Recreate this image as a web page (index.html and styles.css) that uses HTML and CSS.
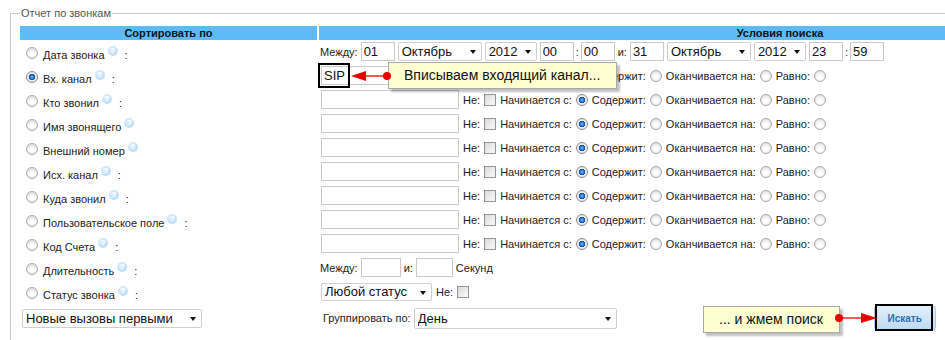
FILE: index.html
```html
<!DOCTYPE html>
<html lang="ru">
<head>
    <meta charset="UTF-8">
    <title>Отчет по звонкам</title>
    <link rel="stylesheet" href="styles.css">
</head>
<body>
    <!-- Форма отчета -->
    <fieldset class="report">
        <legend>Отчет по звонкам</legend>
        <div class="grid">
            <div class="head">Сортировать по</div>
            <div class="head">Условия поиска</div>

            <!-- Дата звонка -->
            <div class="sort"><input type="radio" name="order"><span>Дата звонка<i class="help">?</i> :</span></div>
            <div class="cond tight">
                <span>Между:</span>
                <input class="txt num" value="01">
                <span class="sel month"><select><option>Октябрь</option></select></span>
                <span class="sel year"><select><option>2012</option></select></span>
                <input class="txt num" value="00">
                <span class="colon">:</span>
                <input class="txt num" value="00">
                <span>и:</span>
                <input class="txt num" value="31">
                <span class="sel month"><select><option>Октябрь</option></select></span>
                <span class="sel year"><select><option>2012</option></select></span>
                <input class="txt num" value="23">
                <span class="colon">:</span>
                <input class="txt num" value="59">
            </div>

            <!-- Вх. канал -->
            <div class="sort"><input type="radio" name="order" checked><span>Вх. канал<i class="help">?</i> :</span></div>
            <div class="cond">
                <input class="txt" value="SIP">
                <span>Не:</span><input type="checkbox">
                <span>Начинается с:</span><input type="radio" name="m1" checked>
                <span>Содержит:</span><input type="radio" name="m1">
                <span>Оканчивается на:</span><input type="radio" name="m1">
                <span>Равно:</span><input type="radio" name="m1">
            </div>

            <!-- Кто звонил -->
            <div class="sort"><input type="radio" name="order"><span>Кто звонил<i class="help">?</i> :</span></div>
            <div class="cond">
                <input class="txt">
                <span>Не:</span><input type="checkbox">
                <span>Начинается с:</span><input type="radio" name="m2" checked>
                <span>Содержит:</span><input type="radio" name="m2">
                <span>Оканчивается на:</span><input type="radio" name="m2">
                <span>Равно:</span><input type="radio" name="m2">
            </div>

            <!-- Имя звонящего -->
            <div class="sort"><input type="radio" name="order"><span>Имя звонящего<i class="help">?</i></span></div>
            <div class="cond">
                <input class="txt">
                <span>Не:</span><input type="checkbox">
                <span>Начинается с:</span><input type="radio" name="m3" checked>
                <span>Содержит:</span><input type="radio" name="m3">
                <span>Оканчивается на:</span><input type="radio" name="m3">
                <span>Равно:</span><input type="radio" name="m3">
            </div>

            <!-- Внешний номер -->
            <div class="sort"><input type="radio" name="order"><span>Внешний номер<i class="help">?</i></span></div>
            <div class="cond">
                <input class="txt">
                <span>Не:</span><input type="checkbox">
                <span>Начинается с:</span><input type="radio" name="m4" checked>
                <span>Содержит:</span><input type="radio" name="m4">
                <span>Оканчивается на:</span><input type="radio" name="m4">
                <span>Равно:</span><input type="radio" name="m4">
            </div>

            <!-- Исх. канал -->
            <div class="sort"><input type="radio" name="order"><span>Исх. канал<i class="help">?</i> :</span></div>
            <div class="cond">
                <input class="txt">
                <span>Не:</span><input type="checkbox">
                <span>Начинается с:</span><input type="radio" name="m5" checked>
                <span>Содержит:</span><input type="radio" name="m5">
                <span>Оканчивается на:</span><input type="radio" name="m5">
                <span>Равно:</span><input type="radio" name="m5">
            </div>

            <!-- Куда звонил -->
            <div class="sort"><input type="radio" name="order"><span>Куда звонил<i class="help">?</i> :</span></div>
            <div class="cond">
                <input class="txt">
                <span>Не:</span><input type="checkbox">
                <span>Начинается с:</span><input type="radio" name="m6" checked>
                <span>Содержит:</span><input type="radio" name="m6">
                <span>Оканчивается на:</span><input type="radio" name="m6">
                <span>Равно:</span><input type="radio" name="m6">
            </div>

            <!-- Пользовательское поле -->
            <div class="sort"><input type="radio" name="order"><span>Пользовательское поле<i class="help">?</i> :</span></div>
            <div class="cond">
                <input class="txt">
                <span>Не:</span><input type="checkbox">
                <span>Начинается с:</span><input type="radio" name="m7" checked>
                <span>Содержит:</span><input type="radio" name="m7">
                <span>Оканчивается на:</span><input type="radio" name="m7">
                <span>Равно:</span><input type="radio" name="m7">
            </div>

            <!-- Код Счета -->
            <div class="sort"><input type="radio" name="order"><span>Код Счета<i class="help">?</i> :</span></div>
            <div class="cond">
                <input class="txt">
                <span>Не:</span><input type="checkbox">
                <span>Начинается с:</span><input type="radio" name="m8" checked>
                <span>Содержит:</span><input type="radio" name="m8">
                <span>Оканчивается на:</span><input type="radio" name="m8">
                <span>Равно:</span><input type="radio" name="m8">
            </div>

            <!-- Длительность -->
            <div class="sort"><input type="radio" name="order"><span>Длительность<i class="help">?</i> :</span></div>
            <div class="cond tight">
                <span>Между:</span>
                <input class="txt dur">
                <span>и:</span>
                <input class="txt dur2">
                <span>Секунд</span>
            </div>

            <!-- Статус звонка -->
            <div class="sort"><input type="radio" name="order"><span>Статус звонка<i class="help">?</i> :</span></div>
            <div class="cond">
                <span class="sel status"><select><option>Любой статус</option></select></span>
                <span>Не:</span><input type="checkbox">
            </div>

            <!-- Нижняя строка -->
            <div class="sort bottom">
                <span class="sel order"><select><option>Новые вызовы первыми</option></select></span>
            </div>
            <div class="cond bottom">
                <span>Группировать по:</span>
                <span class="sel group"><select><option>День</option></select></span>
                <button class="search">Искать</button>
            </div>
        </div>
    </fieldset>

    <!-- Подсказки поверх формы -->
    <div class="mark mark-sip"></div>
    <div class="mark mark-btn"></div>
    <div class="note note-sip">Вписываем входящий канал...</div>
    <div class="note note-btn">... и жмем поиск</div>
    <svg class="arrows" width="945" height="340" viewBox="0 0 945 340">
        <line x1="364" y1="76" x2="387" y2="76" stroke="#e60000" stroke-width="1.3"/>
        <polygon points="351,76 366,71 366,81" fill="#e60000"/>
        <circle cx="387" cy="76" r="4" fill="#e60000"/>
        <line x1="839" y1="318" x2="862" y2="318" stroke="#e60000" stroke-width="1.3"/>
        <polygon points="877,318 861,313 861,323" fill="#e60000"/>
        <circle cx="839" cy="318" r="4" fill="#e60000"/>
    </svg>
</body>
</html>
```

FILE: styles.css
```css
html,
body {
    margin: 0;
    padding: 0;
    overflow: hidden;
}

body {
    position: relative;
    width: 945px;
    height: 340px;
    font-family: "Liberation Sans", Arial, sans-serif;
    font-size: 11px;
    color: #222;
    background: #fff;
}

/* Рамка отчета */
.report {
    margin: 6px 0 0 10px;
    padding: 6px 9px 12px 9px;
    border: 1px solid #cbcbcb;
    width: 1221px;
}

.report legend {
    color: #555;
    padding: 0 1px;
    font-size: 11px;
    line-height: 14px;
}

.grid {
    display: grid;
    grid-template-columns: 297px 922px;
    grid-template-rows: 15px repeat(11, 24px) 26px;
    column-gap: 2px;
}

.head {
    height: 14px;
    line-height: 14px;
    background: #5dbbf8;
    color: #111;
    font-weight: bold;
    text-align: center;
}

/* Левая колонка */
.sort {
    display: flex;
    align-items: center;
    gap: 5px;
    padding-left: 6px;
}

.sort.bottom {
    padding-left: 2px;
}

.help {
    display: inline-block;
    width: 10px;
    height: 10px;
    margin: 0 4px 0 3px;
    border-radius: 50%;
    background: radial-gradient(circle at 40% 35%, #e6f3fd, #a8d2f3);
    color: #fff;
    font: bold 8px/10px "Liberation Sans", Arial, sans-serif;
    font-style: normal;
    text-align: center;
    vertical-align: 6px;
}

/* Правая колонка */
.cond {
    display: flex;
    align-items: center;
    gap: 4px;
    padding: 0 0 3px 2px;
}

.cond.tight {
    gap: 3px;
    padding-left: 1px;
}

.cond.tight .colon {
    margin: 0 -1px;
}

.cond.bottom {
    padding: 0 0 0 4px;
    gap: 3px;
}

.txt {
    box-sizing: border-box;
    width: 138px;
    height: 19px;
    margin: 0;
    padding: 0 2px;
    border: 1px solid #c9c9c9;
    font: 13px "Liberation Sans", Arial, sans-serif;
    color: #111;
}

.txt.num {
    width: 34px;
}

.txt.dur {
    width: 40px;
}

.txt.dur2 {
    width: 37px;
}

/* Выпадающие списки */
.sel {
    position: relative;
    display: inline-block;
}

.sel select {
    appearance: none;
    -webkit-appearance: none;
    box-sizing: border-box;
    width: 100%;
    height: 19px;
    margin: 0;
    padding: 0 16px 0 3px;
    border: 1px solid #cfcfcf;
    border-radius: 2px;
    background: #fff;
    color: #111;
    font: 13px "Liberation Sans", Arial, sans-serif;
}

.sel::after {
    content: "";
    position: absolute;
    right: 6px;
    top: 8px;
    border-left: 3.5px solid transparent;
    border-right: 3.5px solid transparent;
    border-top: 4px solid #111;
    pointer-events: none;
}

.sel.month { width: 84px; }
.sel.year { width: 52px; }
.sel.status { width: 111px; }
.sel.status select { height: 18px; }
.sel.order { width: 180px; }
.sel.group { width: 203px; }
.sel.group select { height: 21px; }
.sel.group::after { top: 9px; }

/* Радио и флажки */
input[type="radio"] {
    appearance: none;
    -webkit-appearance: none;
    box-sizing: border-box;
    flex: none;
    width: 12px;
    height: 12px;
    margin: 0;
    border: 1px solid #a9a9a9;
    border-radius: 50%;
    background: radial-gradient(circle at 50% 60%, #fff 25%, #d4d4d4 100%);
}

input[type="radio"]:checked {
    border-color: #8d8d8d;
    background: radial-gradient(circle, #86c8ff 0, #2a74d4 1.8px, #174f9c 3px, #f4f4f4 3.6px, #d4d4d4 100%);
}

input[type="checkbox"] {
    appearance: none;
    -webkit-appearance: none;
    box-sizing: border-box;
    flex: none;
    width: 12px;
    height: 12px;
    margin: 0;
    border: 1px solid #939393;
    background: linear-gradient(135deg, #d8d8d8, #fbfbfb);
}

.search {
    box-sizing: border-box;
    width: 62px;
    height: 26px;
    margin-left: 254px;
    border: 1px solid #a3c8ea;
    border-radius: 4px;
    background: linear-gradient(#e3f0fb, #bcd9f3);
    color: #2f6fb1;
    font: bold 10px "Liberation Sans", Arial, sans-serif;
    cursor: pointer;
}

/* Подсказки */
.mark {
    position: absolute;
    box-sizing: border-box;
    border: 2px solid #000;
}

.mark-sip {
    left: 318px;
    top: 63px;
    width: 32px;
    height: 25px;
}

.mark-btn {
    left: 875px;
    top: 304px;
    width: 58px;
    height: 27px;
}

.note {
    position: absolute;
    box-sizing: border-box;
    height: 27px;
    padding-left: 15px;
    border: 1px solid #a8a8a8;
    background: #ffffd2;
    box-shadow: 3px 3px 2px rgba(0, 0, 0, 0.25);
    color: #111;
    font-size: 14px;
    line-height: 25px;
    white-space: nowrap;
}

.note-sip {
    left: 388px;
    top: 62px;
    width: 229px;
}

.note-btn {
    left: 703px;
    top: 306px;
    width: 137px;
}

.arrows {
    position: absolute;
    left: 0;
    top: 0;
    pointer-events: none;
}
```
